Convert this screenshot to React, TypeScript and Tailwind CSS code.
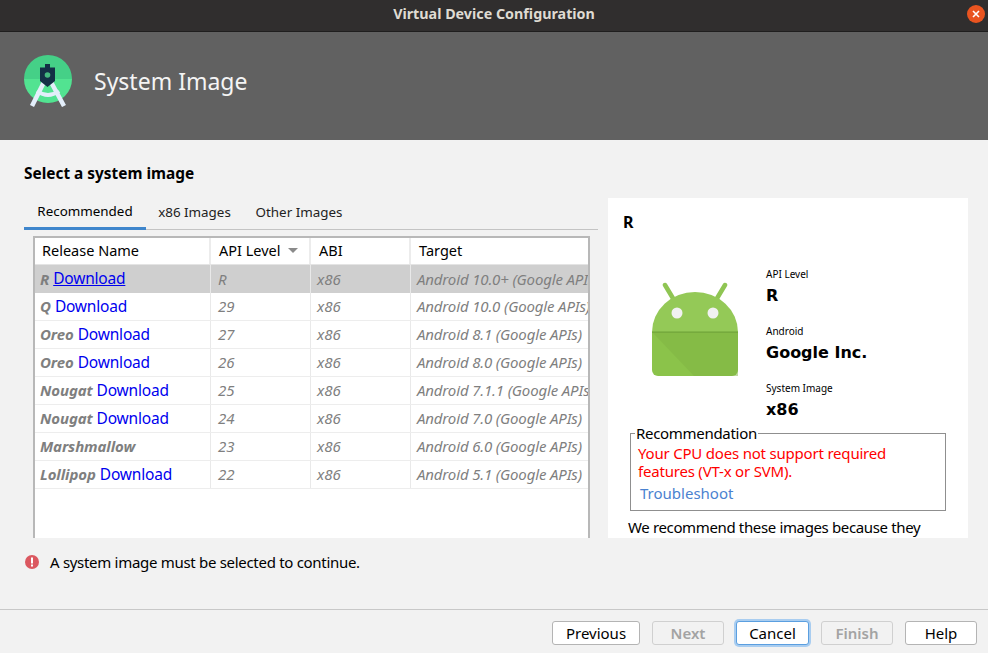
const rows = [
  { name: "R", link: true, api: "R", target: "Android 10.0+ (Google APIs)" },
  { name: "Q", link: true, api: "29", target: "Android 10.0 (Google APIs)" },
  { name: "Oreo", link: true, api: "27", target: "Android 8.1 (Google APIs)" },
  { name: "Oreo", link: true, api: "26", target: "Android 8.0 (Google APIs)" },
  { name: "Nougat", link: true, api: "25", target: "Android 7.1.1 (Google APIs)" },
  { name: "Nougat", link: true, api: "24", target: "Android 7.0 (Google APIs)" },
  { name: "Marshmallow", link: false, api: "23", target: "Android 6.0 (Google APIs)" },
  { name: "Lollipop", link: true, api: "22", target: "Android 5.1 (Google APIs)" },
];

const StudioLogo = () => (
  <svg width="50" height="52" viewBox="0 0 50 52">
    <path d="M1 24a24 24 0 0 1 48 0z" fill="#45d087" />
    <path d="M1 24a24 24 0 0 0 48 0z" fill="#52e391" />
    <path d="M21 27L9 51M28 27L41 51" stroke="#e3eefa" strokeWidth="4.500" fill="none" />
    <path d="M14 36q11 8 22 0" stroke="#e3eefa" strokeWidth="4" fill="none" />
    <path d="M22 9h5v3.500h5V26l-7.500 6-7.500-6V12.500h5z" fill="#133046" />
    <circle cx="24.500" cy="20" r="2.800" fill="#45b87f" />
  </svg>
);

const AndroidIcon = () => (
  <svg width="86" height="94" viewBox="0 0 86 94">
    <path d="M13 3l9 15M73 3l-9 15" stroke="#8fc553" strokeWidth="4.500" strokeLinecap="round" />
    <path d="M0 50a43 40 0 0 1 86 0z" fill="#94c957" />
    <path d="M0 50h86v38a6 6 0 0 1-6 6H6a6 6 0 0 1-6-6z" fill="#8bc34a" />
    <path d="M0 50h86v44H42z" fill="#7fb342" opacity="0.5" />
    <rect x="0" y="49.500" width="86" height="1.200" fill="#6fa339" />
    <circle cx="25" cy="31" r="5.500" fill="#f1f1f1" />
    <circle cx="61" cy="31" r="5.500" fill="#f1f1f1" />
  </svg>
);

const Btn = ({ label, kind }: { label: string; kind?: "off" | "focus" }) => (
  <div
    className={
      kind === "off"
        ? "h-6 w-[72px] rounded-[3px] border border-[#d0d0d0] bg-[#f2f2f2] flex items-center justify-center text-[#a3a3a3] font-semibold"
        : kind === "focus"
          ? "h-6 w-[73px] rounded-[3px] border border-[#5b9fe0] bg-white flex items-center justify-center text-black ring-2 ring-[#a9cdf0]"
          : "h-6 rounded-[3px] border border-[#b4b4b4] bg-white flex items-center justify-center text-black"
    }
  >
    {label}
  </div>
);

const InfoBlock = ({ label, value, mt }: { label: string; value: string; mt: string }) => (
  <div className={mt}>
    <div className="text-[10px] leading-[14px] text-black">{label}</div>
    <div className="text-[16px] leading-[22px] mt-[4px] font-bold text-black font-['DejaVu_Sans',sans-serif]">{value}</div>
  </div>
);

export default function App() {
  return (
    <div className="w-[988px] h-[653px] overflow-hidden flex flex-col bg-[#f2f2f2] font-['Noto_Sans','Open_Sans',sans-serif] text-[15px]">
      <div className="h-[32px] shrink-0 bg-[#302e2e] border-b border-[#1f1e1e] relative flex items-center justify-center pb-[3px]">
        <span className="text-[14.300px] font-bold text-[#dfdbd2]">Virtual Device Configuration</span>
        <div className="absolute right-[3px] top-[5px] w-[18px] h-[18px] rounded-full bg-[#e95420] flex items-center justify-center">
          <svg width="10" height="10" viewBox="0 0 10 10">
            <path d="M2 2l6 6M8 2l-6 6" stroke="#fff" strokeWidth="1.600" />
          </svg>
        </div>
      </div>

      <div className="h-[108px] shrink-0 bg-[#616161] flex items-center pl-[23px] pb-[10px]">
        <StudioLogo />
        <span className="ml-[21px] text-[23px] text-[#f4f4f4]">System Image</span>
      </div>

      <div className="h-[469px] shrink-0 flex flex-col pl-[24px] pr-[20px]">
        <div className="h-[58px] pt-[24px] text-[15.400px] leading-[20px] font-bold text-black">Select a system image</div>
        <div className="flex h-[340px] gap-[10px]">
          <div className="w-[574px] flex flex-col">
            <div className="h-[32px] flex border-b border-[#c4c4c4] text-black text-[13.400px]">
              <div className="w-[122px] h-[32px] border-b-[3px] border-[#3f86cc] flex items-center justify-center pb-[2px]">Recommended</div>
              <div className="w-[97px] h-[32px] flex items-center justify-center pb-[3px] text-[#222]">x86 Images</div>
              <div className="w-[112px] h-[32px] flex items-center justify-center pb-[3px] text-[#222]">Other Images</div>
            </div>
            <div className="ml-[9px] mt-[6px] w-[557px] h-[302px] border-2 border-b-0 border-[#b8b8b8] bg-white overflow-hidden">
              <div className="h-[27px] flex items-center text-black border-b border-[#e4e4e4] text-[14.500px]">
                <div className="w-[176px] h-full flex items-center pl-[7px] border-r-2 border-[#ececec]">Release Name</div>
                <div className="w-[100px] h-full flex items-center pl-[8px] border-r-2 border-[#ececec]">
                  API Level
                  <svg className="ml-[7px]" width="10" height="6" viewBox="0 0 10 6">
                    <path d="M0 0h10L5 5z" fill="#8a8a8a" />
                  </svg>
                </div>
                <div className="w-[100px] h-full flex items-center pl-[8px] border-r-2 border-[#ececec]">ABI</div>
                <div className="flex-1 h-full flex items-center pl-[8px]">Target</div>
              </div>
              {rows.map((row, i) => (
                <div
                  key={row.api}
                  className={
                    i === 0
                      ? "h-[28px] flex items-center bg-[#cfcfcf] text-[#7f7f7f] italic"
                      : "h-[28px] flex items-center border-b border-[#ededed] text-[#7f7f7f] italic"
                  }
                >
                  <div className="w-[176px] h-full flex items-center pl-[5px] border-r border-[#e9e9e9] whitespace-nowrap">
                    <span className="font-bold tracking-[-0.1px]">{row.name}</span>
                    {row.link && (
                      <span className={i === 0 ? "ml-[4px] not-italic text-[15.500px] tracking-[-0.2px] text-[#0000ee] underline" : "ml-[4px] not-italic text-[15.500px] tracking-[-0.2px] text-[#0000ee]"}>
                        Download
                      </span>
                    )}
                  </div>
                  <div className="w-[100px] h-full flex items-center pl-[7px] border-r border-[#e9e9e9]">{row.api}</div>
                  <div className="w-[100px] h-full flex items-center pl-[6px] border-r border-[#e9e9e9]">x86</div>
                  <div className="flex-1 h-full flex items-center pl-[6px] tracking-[-0.15px] whitespace-nowrap overflow-hidden">{row.target}</div>
                </div>
              ))}
            </div>
          </div>

          <div className="w-[360px] h-[340px] bg-white overflow-hidden px-[20px] text-black">
            <div className="pt-[14px] -ml-[5px] text-[16px] leading-[20px] font-bold">R</div>
            <div className="flex mt-[34px]">
              <div className="w-[138px] pl-[24px] pt-[16px] shrink-0">
                <AndroidIcon />
              </div>
              <div className="pt-[1px]">
                <InfoBlock label="API Level" value="R" mt="mt-0" />
                <InfoBlock label="Android" value="Google Inc." mt="mt-[17px]" />
                <InfoBlock label="System Image" value="x86" mt="mt-[17px]" />
              </div>
            </div>
            <div className="relative ml-[2px] mt-[12px] w-[316px] h-[78px] border border-[#8f8f8f] pl-[7px] pt-[10px]">
              <span className="absolute left-[4px] top-[-10px] bg-white px-[1px] leading-[18px] tracking-[-0.3px]">Recommendation</span>
              <div className="text-[#ff0000] leading-[18px] tracking-[-0.2px]">
                Your CPU does not support required
                <br />
                features (VT-x or SVM).
              </div>
              <div className="text-[#4a82d0] leading-[18px] mt-[4px] ml-[2px]">Troubleshoot</div>
            </div>
            <div className="mt-[6px] leading-[20px] tracking-[-0.36px] whitespace-nowrap">We recommend these images because they</div>
          </div>
        </div>
        <div className="flex items-center mt-[14px] h-[20px] text-black pl-[1px]">
          <svg width="14" height="14" viewBox="0 0 14 14">
            <circle cx="7" cy="7" r="7" fill="#db5860" />
            <rect x="6" y="2.500" width="2" height="6" fill="#fff" />
            <rect x="6" y="9.500" width="2" height="2" fill="#fff" />
          </svg>
          <span className="ml-[11px] tracking-[-0.3px]">A system image must be selected to continue.</span>
        </div>
      </div>

      <div className="flex-1 border-t border-[#c8c8c8] flex justify-end gap-[12px] pt-[11px] pr-[11px] items-start">
        <div className="w-[88px]"><Btn label="Previous" /></div>
        <Btn label="Next" kind="off" />
        <Btn label="Cancel" kind="focus" />
        <Btn label="Finish" kind="off" />
        <div className="w-[72px]"><Btn label="Help" /></div>
      </div>
    </div>
  );
}
